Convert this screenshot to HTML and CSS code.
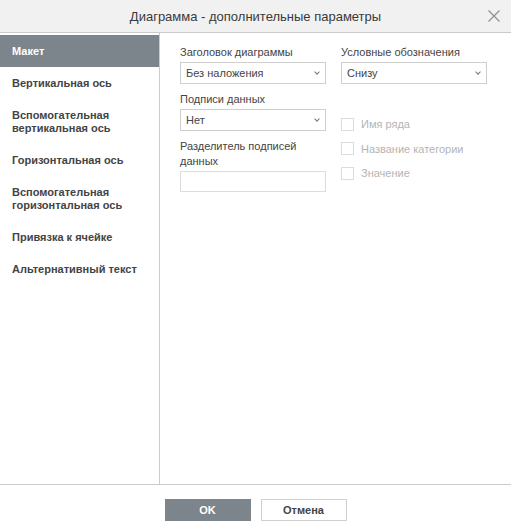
FILE: index.html
```html
<!DOCTYPE html>
<html lang="ru">
<head>
    <meta charset="UTF-8">
    <meta name="viewport" content="width=device-width, initial-scale=1.0">
    <title>Диаграмма - дополнительные параметры</title>
    <link rel="stylesheet" href="styles.css">
</head>
<body>
    <div class="dialog">
        <div class="header">
            <span class="title">Диаграмма - дополнительные параметры</span>
            <span class="close">
                <svg width="12" height="12" viewBox="0 0 12 12">
                    <path d="M0.5 0.5 L11.5 11.5 M11.5 0.5 L0.5 11.5" stroke="#8c8c8c" stroke-width="1.1" fill="none"/>
                </svg>
            </span>
        </div>

        <div class="body">
            <div class="sidebar">
                <div class="tab active">Макет</div>
                <div class="tab">Вертикальная ось</div>
                <div class="tab">Вспомогательная<br>вертикальная ось</div>
                <div class="tab">Горизонтальная ось</div>
                <div class="tab">Вспомогательная<br>горизонтальная ось</div>
                <div class="tab">Привязка к ячейке</div>
                <div class="tab">Альтернативный текст</div>
            </div>

            <div class="content">
                <div class="column">
                    <div class="label">Заголовок диаграммы</div>
                    <div class="select">Без наложения <span class="arrow"></span></div>

                    <div class="label">Подписи данных</div>
                    <div class="select">Нет <span class="arrow"></span></div>

                    <div class="label">Разделитель подписей<br>данных</div>
                    <div class="input"></div>
                </div>

                <div class="column">
                    <div class="label">Условные обозначения</div>
                    <div class="select">Снизу <span class="arrow"></span></div>

                    <div class="checks">
                        <div class="check"><span class="box"></span>Имя ряда</div>
                        <div class="check"><span class="box"></span>Название категории</div>
                        <div class="check"><span class="box"></span>Значение</div>
                    </div>
                </div>
            </div>
        </div>

        <div class="footer">
            <button class="btn primary">OK</button>
            <button class="btn">Отмена</button>
        </div>
    </div>
</body>
</html>
```

FILE: styles.css
```css
body {
    margin: 0;
    font-family: Arial, "Liberation Sans", sans-serif;
    font-size: 11px;
    color: #444;
    background: white;
}
.dialog {
    width: 511px;
    height: 530px;
    display: flex;
    flex-direction: column;
}
.header {
    height: 32px;
    background: #f1f1f1;
    border-bottom: 1px solid #cbcbcb;
    display: flex;
    align-items: center;
    justify-content: center;
    position: relative;
}
.title {
    font-size: 13px;
    color: #3a3a3a;
}
.close {
    position: absolute;
    right: 11px;
    top: 10px;
    width: 12px;
    height: 12px;
}
.close svg {
    display: block;
}
.body {
    flex: 1;
    display: flex;
}
.sidebar {
    width: 159px;
    border-right: 1px solid #cbcbcb;
    padding-top: 2px;
}
.tab {
    font-weight: bold;
    line-height: 13px;
    padding: 9.5px 12px 9.5px;
    color: #444;
}
.tab.active {
    padding: 10px 12px 9px;
    background: #7d858c;
    color: white;
}
.content {
    flex: 1;
    display: flex;
    gap: 15px;
    padding: 12px 20px;
}
.column {
    width: 146px;
}
.label {
    line-height: 15px;
    margin: 8px 0 2px;
}
.column .label:first-child {
    margin-top: 0;
}
.select, .input {
    height: 20px;
    border: 1px solid #cfcfcf;
    box-sizing: content-box;
    line-height: 20px;
    padding: 0 5px;
    position: relative;
}
.input {
    height: 19px;
    border-color: #dcdcdc;
}
.arrow {
    position: absolute;
    right: 6px;
    top: 7px;
    width: 3px;
    height: 3px;
    border-right: 1px solid #777;
    border-bottom: 1px solid #777;
    transform: rotate(45deg);
}
.checks {
    margin-top: 34px;
}
.check {
    display: flex;
    align-items: center;
    height: 12px;
    margin-bottom: 12.5px;
    color: #b4b4b4;
}
.box {
    width: 11px;
    height: 11px;
    border: 1px solid #dcdcdc;
    margin-right: 7px;
}
.footer {
    height: 46px;
    border-top: 1px solid #cbcbcb;
    display: flex;
    justify-content: center;
    gap: 10px;
    padding-top: 14px;
    box-sizing: border-box;
}
.btn {
    width: 86px;
    height: 22px;
    border: 1px solid #cfcfcf;
    background: white;
    font-family: Arial, "Liberation Sans", sans-serif;
    font-size: 11px;
    font-weight: bold;
    color: #444;
    padding: 0;
}
.btn.primary {
    background: #7d858c;
    border-color: #7d858c;
    color: white;
}
```
